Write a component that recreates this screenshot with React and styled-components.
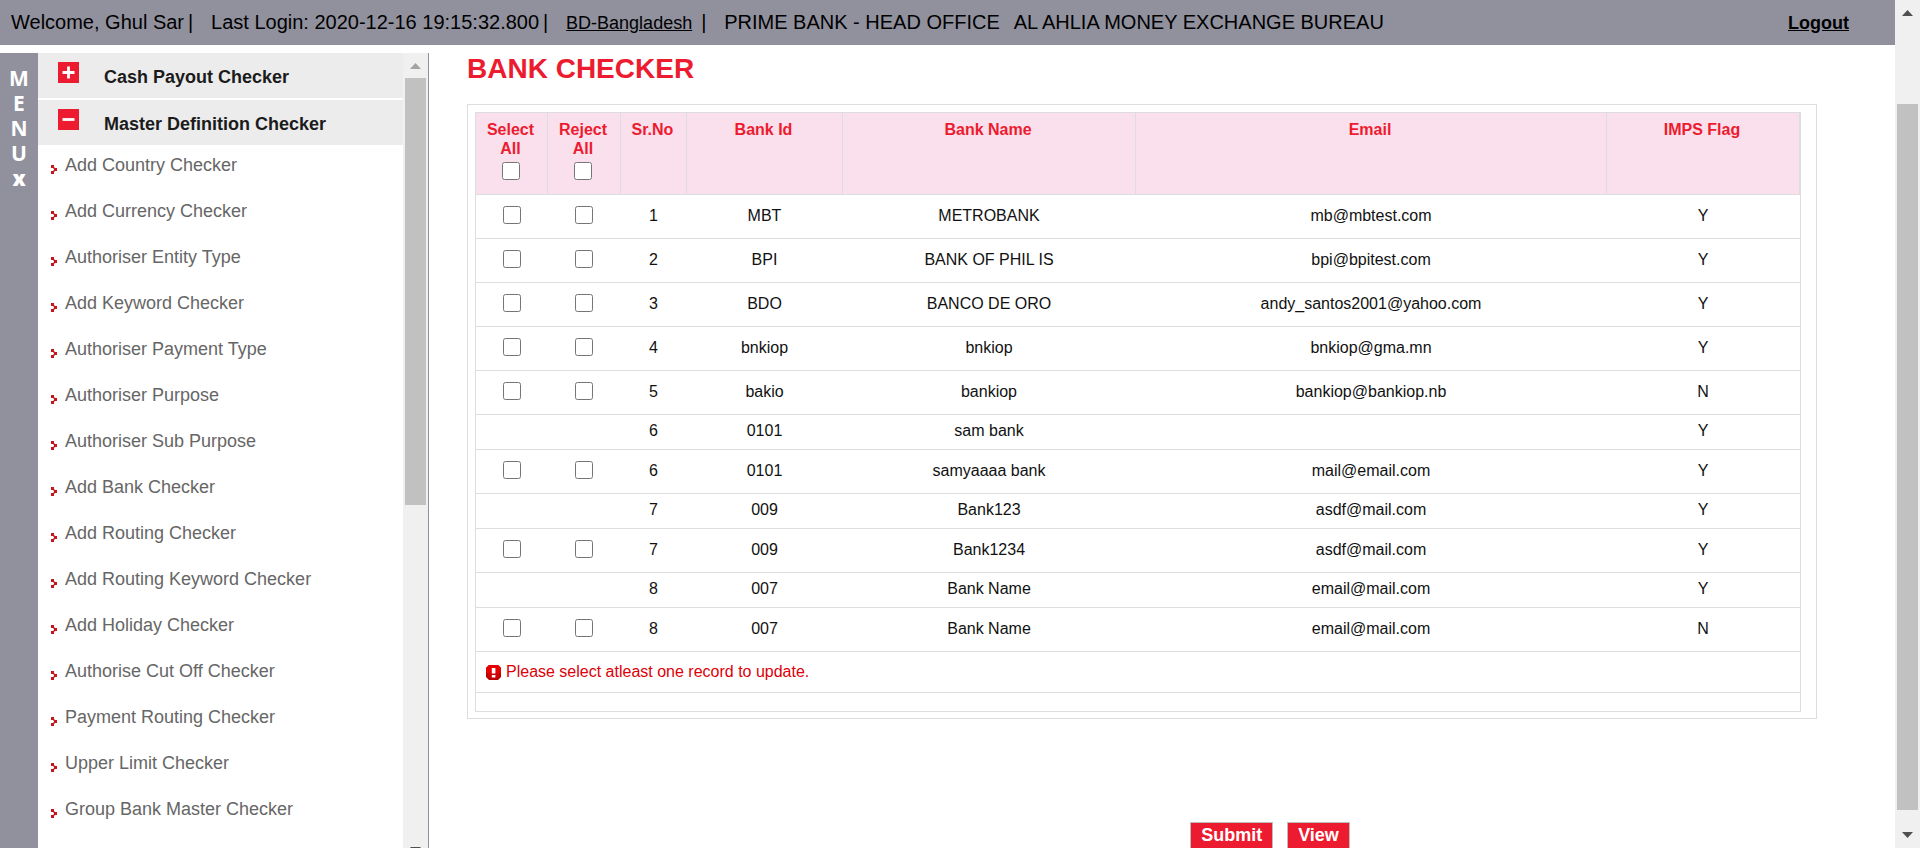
import React from "react";
import styled, { createGlobalStyle } from "styled-components";

const GlobalStyle = createGlobalStyle`
  * { box-sizing: border-box; }
  body {
    margin: 0;
    background: #fff;
    color: #111;
    font-family: "Liberation Sans", Arial, Helvetica, sans-serif;
    font-size: 16px;
    overflow: hidden;
  }
`;

const Window = styled.div`
  display: flex;
  height: 100vh;
  overflow: hidden;
`;

const Page = styled.div`
  flex: 1;
  min-width: 0;
  display: flex;
  flex-direction: column;
`;

const TopBar = styled.header`
  flex: none;
  height: 45px;
  padding: 0 46px 1px 11px;
  display: flex;
  align-items: center;
  background: #91919e;
  color: #000;
  font-size: 20px;
  white-space: nowrap;
`;

const TopItem = styled.span`
  margin-right: ${(p) => p.$gap || 4}px;
`;

const Divider = styled.span`
  width: 5px;
  margin-right: 18px;
  text-align: center;
`;

const TopLink = styled.a`
  color: #000;
  font-size: 18px;
  line-height: 20px;
  padding-top: 2px;
  margin-right: 9px;
`;

const Logout = styled(TopLink)`
  margin-left: auto;
  margin-right: 0;
  font-weight: bold;
`;

const Body = styled.div`
  flex: 1;
  min-height: 0;
  display: flex;
  padding-top: 8px;
`;

const MenuTab = styled.button`
  flex: none;
  width: 38px;
  padding: 13px 0 0;
  border: 0;
  display: flex;
  flex-direction: column;
  align-items: center;
  justify-content: flex-start;
  background: #91919e;
  color: #fff;
  font: 700 21px/25px "Open Sans", sans-serif;
`;

const MenuLetter = styled.span`
  display: block;
  height: 25px;
  font-weight: ${(p) => (p.$close ? 800 : 700)};
`;

const Sidebar = styled.aside`
  flex: none;
  display: flex;
  width: 391px;
  height: calc(100% + 15px);
  border-right: 1px solid #91919e;
`;

const Nav = styled.nav`
  flex: 1;
  overflow: hidden;
`;

const Group = styled.button`
  display: flex;
  width: 100%;
  height: 45px;
  margin: 0 0 2px;
  padding: 9px 20px 0;
  gap: 25px;
  border: 0;
  background: #ececec;
  color: #1b1b1b;
  font: bold 18px/30px "Liberation Sans", Arial, sans-serif;
  text-align: left;
  &:last-of-type { margin-bottom: 0; }
`;

const MenuList = styled.ul`
  list-style: none;
  margin: 0;
  padding: 0;
`;

const MenuItem = styled.li`
  display: flex;
  height: 46px;
  padding: 9px 13px 0;
  gap: 8px;
  svg { flex: none; margin-top: 11px; }
`;

const MenuLink = styled.a`
  color: #666;
  font-size: 18px;
  line-height: 22px;
  text-decoration: none;
`;

const Track = styled.div`
  flex: none;
  width: 25px;
  display: flex;
  flex-direction: column;
  background: #f0f0f0;
`;

const ScrollButton = styled.button`
  flex: none;
  height: 25px;
  padding: 0;
  border: 0;
  background: none;
  color: ${(p) => (p.$dim ? "#a3a3a3" : "#505050")};
  display: flex;
  justify-content: center;
  align-items: ${(p) => (p.$down ? "flex-start" : "flex-end")};
  svg { margin: 9px 0; }
`;

const Space = styled.div`
  flex: ${(p) => p.$size} 0 0;
`;

const Thumb = styled(Space)`
  margin: 0 2px;
  background: #c1c1c1;
`;

const Main = styled.main`
  flex: 1;
  min-width: 0;
  padding: 0 78px 0 38px;
`;

const Title = styled.h1`
  margin: 0 0 19px;
  color: #ed1b2f;
  font-size: 28px;
  line-height: 32px;
`;

const Panel = styled.section`
  border: 1px solid #ddd;
  padding: 7px 15px 6px 7px;
`;

const Grid = styled.table`
  width: 100%;
  table-layout: fixed;
  border: 1px solid #ddd;
  border-collapse: separate;
  border-spacing: 0;
`;

const HeadCell = styled.th`
  height: 82px;
  padding: 7px 6px 0 4px;
  border-right: 1px solid #ddd;
  border-bottom: 1px solid #ddd;
  background: #fae0ec;
  color: #ed1b2f;
  font-size: 16px;
  line-height: 19px;
  vertical-align: top;
`;

const CheckLabel = styled.label`
  display: flex;
  flex-direction: column;
  align-items: center;
  gap: 4px;
  padding: 0 7px;
`;

const Check = styled.input.attrs({ type: "checkbox" })`
  display: block;
  width: 18px;
  height: 18px;
  margin: 0 auto;
`;

const Cell = styled.td`
  height: ${(p) => (p.$tall ? 44 : 35)}px;
  padding: 0 5px 3px 4px;
  border-bottom: 1px solid #ddd;
  font-size: 16px;
  line-height: 19px;
  text-align: center;
  vertical-align: middle;
`;

const MessageCell = styled(Cell)`
  height: 41px;
  padding: 0 10px 2px;
`;

const EmptyCell = styled.td`
  height: 18px;
  padding: 0;
`;

const Message = styled.div`
  display: flex;
  align-items: center;
  gap: 5px;
  color: #dd0008;
  svg { flex: none; margin-top: 2px; }
`;

const Actions = styled.div`
  display: flex;
  justify-content: center;
  gap: 14px;
  margin-top: 103px;
  padding-left: 256px;
`;

const Action = styled.button`
  height: 34px;
  padding: 0 10px 8px;
  border: 1px solid #bdbdbd;
  background: #ed1b2f;
  color: #fff;
  font: bold 18px/22px "Liberation Sans", Arial, sans-serif;
`;

const ToggleIcon = ({ open }) => (
  <svg width="21" height="21" viewBox="0 0 21 21" aria-hidden="true">
    <rect width="21" height="21" fill="#ed1b2f" />
    <path d={open ? "M4.5 10.5h12" : "M4.5 10.5h12M10.5 4.5v12"} stroke="#fff" strokeWidth="2.8" />
  </svg>
);

const BulletIcon = () => (
  <svg width="6" height="9" viewBox="0 0 6 9" aria-hidden="true" shapeRendering="crispEdges">
    <path d="M0 0h3v3H0zM0 6h3v3H0zM3 3h3v3H3z" fill="#c4161c" />
    <path d="M3 2h1v1H3zM3 6h1v1H3zM2 3h1v1H2zM2 5h1v1H2z" fill="#e58a8c" />
  </svg>
);

const AlertIcon = () => (
  <svg width="15" height="15" viewBox="0 0 15 15" aria-hidden="true">
    <path d="M3 0h9l3 3v9l-3 3H3l-3-3V3z" fill="#b80000" />
    <path d="M3 0h9l3 3v5H0V3z" fill="#e60000" />
    <path d="M2 8h11v4l-2 1H4l-2-1z" fill="#d00000" />
    <path d="M5.8 3h3.6v5.6H5.8zM5.8 10h3.6v2.400H5.8z" fill="#fff" />
  </svg>
);

const ArrowIcon = ({ down }) => (
  <svg width="11" height="6" viewBox="0 0 11 6" aria-hidden="true">
    <path d={down ? "M0 0h11L5.5 6z" : "M0 6h11L5.5 0z"} fill="currentColor" />
  </svg>
);

const Scrollbar = ({ before, thumb, after, dimUp }) => (
  <Track>
    <ScrollButton aria-label="Scroll up" $dim={dimUp}><ArrowIcon /></ScrollButton>
    <Space $size={before} />
    <Thumb $size={thumb} />
    <Space $size={after} />
    <ScrollButton aria-label="Scroll down" $down><ArrowIcon down /></ScrollButton>
  </Track>
);

const menuItems = [
  "Add Country Checker", "Add Currency Checker", "Authoriser Entity Type",
  "Add Keyword Checker", "Authoriser Payment Type", "Authoriser Purpose",
  "Authoriser Sub Purpose", "Add Bank Checker", "Add Routing Checker",
  "Add Routing Keyword Checker", "Add Holiday Checker", "Authorise Cut Off Checker",
  "Payment Routing Checker", "Upper Limit Checker", "Group Bank Master Checker",
];

const columnWidths = [72, 73, 66, 156, 293, 471, 193];

const banks = [
  { editable: true, values: ["1", "MBT", "METROBANK", "mb@mbtest.com", "Y"] },
  { editable: true, values: ["2", "BPI", "BANK OF PHIL IS", "bpi@bpitest.com", "Y"] },
  { editable: true, values: ["3", "BDO", "BANCO DE ORO", "andy_santos2001@yahoo.com", "Y"] },
  { editable: true, values: ["4", "bnkiop", "bnkiop", "bnkiop@gma.mn", "Y"] },
  { editable: true, values: ["5", "bakio", "bankiop", "bankiop@bankiop.nb", "N"] },
  { editable: false, values: ["6", "0101", "sam bank", "", "Y"] },
  { editable: true, values: ["6", "0101", "samyaaaa bank", "mail@email.com", "Y"] },
  { editable: false, values: ["7", "009", "Bank123", "asdf@mail.com", "Y"] },
  { editable: true, values: ["7", "009", "Bank1234", "asdf@mail.com", "Y"] },
  { editable: false, values: ["8", "007", "Bank Name", "email@mail.com", "Y"] },
  { editable: true, values: ["8", "007", "Bank Name", "email@mail.com", "N"] },
];

export default function App() {
  return (
    <>
      <GlobalStyle />
      <Window>
        <Page>
          <TopBar>
            <TopItem>Welcome, Ghul Sar</TopItem>
            <Divider>|</Divider>
            <TopItem>Last Login: 2020-12-16 19:15:32.800</TopItem>
            <Divider>|</Divider>
            <TopLink href="#country">BD-Bangladesh</TopLink>
            <Divider>|</Divider>
            <TopItem $gap={14}>PRIME BANK - HEAD OFFICE</TopItem>
            <TopItem>AL AHLIA MONEY EXCHANGE BUREAU</TopItem>
            <Logout href="#logout">Logout</Logout>
          </TopBar>
          <Body>
            <MenuTab aria-label="Close menu">
              <MenuLetter>M</MenuLetter>
              <MenuLetter>E</MenuLetter>
              <MenuLetter>N</MenuLetter>
              <MenuLetter>U</MenuLetter>
              <MenuLetter $close>x</MenuLetter>
            </MenuTab>
            <Sidebar>
              <Nav>
                <Group><ToggleIcon />Cash Payout Checker</Group>
                <Group><ToggleIcon open />Master Definition Checker</Group>
                <MenuList>
                  {menuItems.map((item) => (
                    <MenuItem key={item}>
                      <BulletIcon />
                      <MenuLink href="#menu">{item}</MenuLink>
                    </MenuItem>
                  ))}
                </MenuList>
              </Nav>
              <Scrollbar before={0} thumb={427} after={333} dimUp />
            </Sidebar>
            <Main>
              <Title>BANK CHECKER</Title>
              <Panel>
                <Grid>
                  <colgroup>
                    {columnWidths.map((width, i) => <col key={i} width={width} />)}
                  </colgroup>
                  <thead>
                    <tr>
                      <HeadCell><CheckLabel>Select All<Check /></CheckLabel></HeadCell>
                      <HeadCell><CheckLabel>Reject All<Check /></CheckLabel></HeadCell>
                      <HeadCell>Sr.No</HeadCell>
                      <HeadCell>Bank Id</HeadCell>
                      <HeadCell>Bank Name</HeadCell>
                      <HeadCell>Email</HeadCell>
                      <HeadCell>IMPS Flag</HeadCell>
                    </tr>
                  </thead>
                  <tbody>
                    {banks.map(({ editable, values }, row) => (
                      <tr key={row}>
                        <Cell $tall={editable}>
                          {editable && <Check aria-label={`Select ${values[2]}`} />}
                        </Cell>
                        <Cell $tall={editable}>
                          {editable && <Check aria-label={`Reject ${values[2]}`} />}
                        </Cell>
                        {values.map((value, i) => <Cell key={i} $tall={editable}>{value}</Cell>)}
                      </tr>
                    ))}
                    <tr>
                      <MessageCell colSpan={7}>
                        <Message role="alert">
                          <AlertIcon />
                          Please select atleast one record to update.
                        </Message>
                      </MessageCell>
                    </tr>
                    <tr><EmptyCell colSpan={7} /></tr>
                  </tbody>
                </Grid>
              </Panel>
              <Actions>
                <Action>Submit</Action>
                <Action>View</Action>
              </Actions>
            </Main>
          </Body>
        </Page>
        <Scrollbar before={79} thumb={706} after={13} />
      </Window>
    </>
  );
}
